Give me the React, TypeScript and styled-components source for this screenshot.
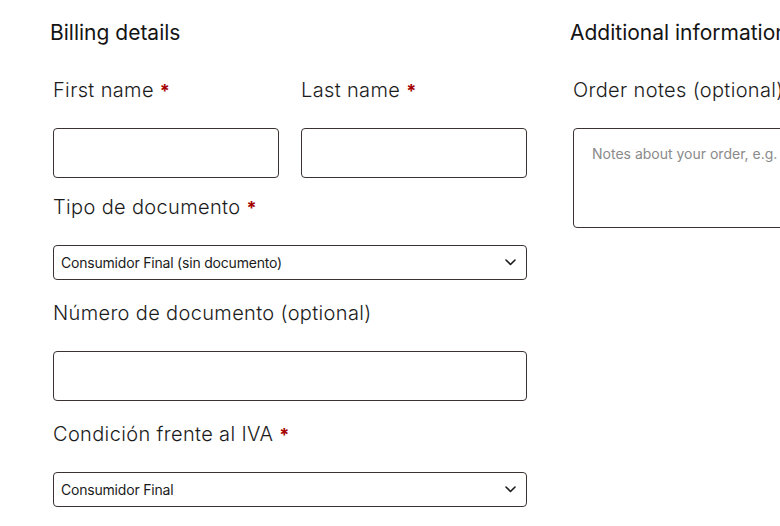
import React from 'react';
import styled, { createGlobalStyle } from 'styled-components';

const GlobalStyle = createGlobalStyle`
  html, body {
    margin: 0;
    padding: 0;
    overflow: hidden;
    background: #ffffff;
  }
  body {
    font-family: Inter, "Noto Sans", sans-serif;
    color: #1b1b1b;
  }
`;

const Chevron = () => (
  <svg width="11" height="7" viewBox="0 0 11 7" fill="none">
    <path d="M1 1l4.5 4.5L10 1" stroke="#1b1b1b" strokeWidth="1.6" strokeLinecap="round" strokeLinejoin="round" />
  </svg>
);

const App: React.FC = () => {
  return (
    <>
      <GlobalStyle />
      <Page>
        <Column>
          <Heading>Billing details</Heading>
          <NameRow>
            <Field $inRow>
              <Label>First name <Required>*</Required></Label>
              <TextInput />
            </Field>
            <Field $inRow>
              <Label>Last name <Required>*</Required></Label>
              <TextInput />
            </Field>
          </NameRow>
          <Field>
            <Label>Tipo de documento <Required>*</Required></Label>
            <SelectBox>
              <SelectText>Consumidor Final (sin documento)</SelectText>
              <Chevron />
            </SelectBox>
          </Field>
          <Field>
            <Label>Número de documento (optional)</Label>
            <TextInput />
          </Field>
          <Field>
            <Label>Condición frente al IVA <Required>*</Required></Label>
            <SelectBox>
              <SelectText>Consumidor Final</SelectText>
              <Chevron />
            </SelectBox>
          </Field>
        </Column>
        <Column>
          <Heading>Additional information</Heading>
          <Field>
            <Label>Order notes (optional)</Label>
            <Notes placeholder="Notes about your order, e.g. special notes for delivery." />
          </Field>
        </Column>
      </Page>
    </>
  );
};

export default App;

const Page = styled.div`
  display: grid;
  grid-template-columns: 480px 480px;
  column-gap: 40px;
  padding: 18px 0 0 50px;
  width: 1100px;
  box-sizing: border-box;
`;

const Column = styled.div`
  display: flex;
  flex-direction: column;
  min-width: 0;
`;

const Heading = styled.h3`
  margin: 0 0 27px;
  font-size: 21px;
  line-height: 30px;
  font-weight: 400;
  color: #141414;
  white-space: nowrap;
`;

const NameRow = styled.div`
  display: grid;
  grid-template-columns: 1fr 1fr;
  column-gap: 22px;
  padding: 0 3px;
  margin-bottom: -4px;
`;

const Field = styled.div<{ $inRow?: boolean }>`
  display: flex;
  flex-direction: column;
  min-width: 0;
  padding: ${(p) => (p.$inRow ? '0' : '0 3px')};
  margin-bottom: 18px;
`;

const Label = styled.label`
  font-size: 20px;
  line-height: 30px;
  font-weight: 300;
  color: #1b1b1b;
  margin-bottom: 23px;
  white-space: nowrap;
  letter-spacing: 0.35px;
`;

const Required = styled.span`
  color: #a50000;
  font-weight: 700;
  font-size: 18px;
  line-height: 1;
`;

const TextInput = styled.input`
  height: 50px;
  width: 100%;
  min-width: 0;
  box-sizing: border-box;
  border: 1px solid #3d3232;
  border-radius: 4px;
  background: #fff;
  padding: 0 16px;
  font-family: inherit;
  font-size: 14px;
  outline: none;
`;

const SelectBox = styled.div`
  height: 35px;
  box-sizing: border-box;
  border: 1px solid #3d3232;
  border-radius: 4px;
  display: flex;
  align-items: center;
  justify-content: space-between;
  padding: 0 10px 0 7px;
`;

const SelectText = styled.span`
  font-size: 14px;
  color: #1b1b1b;
  letter-spacing: -0.2px;
`;

const Notes = styled.textarea`
  height: 100px;
  width: 100%;
  box-sizing: border-box;
  border: 1px solid #3d3232;
  border-radius: 4px;
  padding: 16px 18px;
  font-family: inherit;
  font-size: 14px;
  resize: none;
  outline: none;
  &::placeholder {
    color: #8a8a8a;
  }
`;
